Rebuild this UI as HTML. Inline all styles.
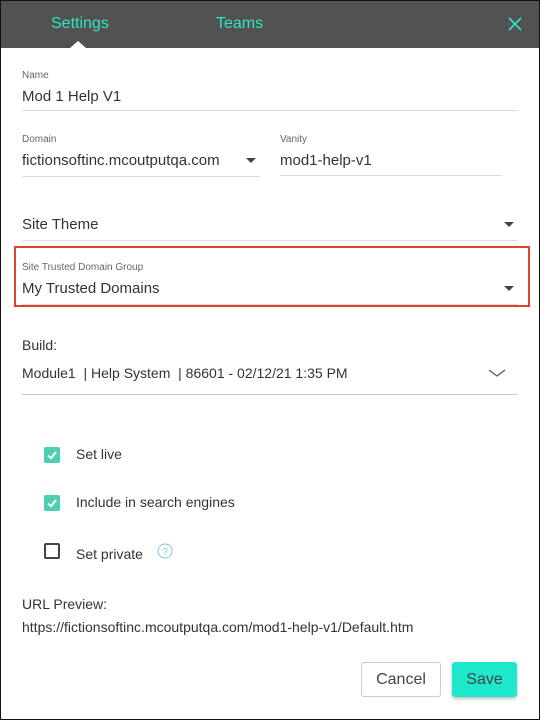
<!DOCTYPE html>
<html><head><meta charset="utf-8"><style>
*{margin:0;padding:0;box-sizing:border-box}
body{width:540px;height:720px;overflow:hidden;background:#fff;font-family:"Liberation Sans",sans-serif;color:#333;position:relative}
.frame{position:absolute;left:0;top:0;width:540px;height:720px;border:1px solid #111;pointer-events:none}
.hdr{position:absolute;left:0;top:0;width:540px;height:48px;background:#525252}
.t{position:absolute;white-space:nowrap;line-height:1}
.lbl{font-size:10px;color:#666}
.val{font-size:15px;color:#333}
.line{position:absolute;height:1px;background:#ddd}
.arr{position:absolute;width:0;height:0;border-left:5px solid transparent;border-right:5px solid transparent;border-top:5px solid #444}
.cb{position:absolute;width:16px;height:16px;border-radius:2px;background:#4fcfad}
.cbo{position:absolute;width:16px;height:16px;border:2px solid #444;border-radius:2px}
</style></head><body>
<div class="hdr"></div>
<div class="t" style="left:51px;top:16px;font-size:16px;color:#2de6c3">Settings</div>
<div class="t" style="left:216px;top:16px;font-size:16px;color:#2de6c3">Teams</div>
<svg style="position:absolute;left:507px;top:16px" width="16" height="16"><path d="M2 2L14 14M14 2L2 14" stroke="#2de6c3" stroke-width="1.6"/></svg>
<div style="position:absolute;left:70px;top:41px;width:0;height:0;border-left:8px solid transparent;border-right:8px solid transparent;border-bottom:7px solid #fff"></div>

<div class="t lbl" style="left:22px;top:71px">Name</div>
<div class="t val" style="left:22px;top:89px">Mod 1 Help V1</div>
<div class="line" style="left:22px;top:110px;width:496px"></div>

<div class="t lbl" style="left:22px;top:135px">Domain</div>
<div class="t val" style="left:22px;top:153px">fictionsoftinc.mcoutputqa.com</div>
<div class="arr" style="left:246px;top:158px"></div>
<div class="line" style="left:22px;top:176px;width:238px"></div>
<div class="t lbl" style="left:280px;top:135px">Vanity</div>
<div class="t val" style="left:280px;top:153px">mod1-help-v1</div>
<div class="line" style="left:280px;top:175px;width:222px"></div>

<div class="t val" style="left:22px;top:217px">Site Theme</div>
<div class="arr" style="left:504px;top:222px"></div>
<div class="line" style="left:22px;top:240px;width:496px"></div>

<div style="position:absolute;left:14px;top:246px;width:516px;height:61px;border:2px solid #e0432a"></div>
<div class="t lbl" style="left:22px;top:263px">Site Trusted Domain Group</div>
<div class="t val" style="left:22px;top:281px">My Trusted Domains</div>
<div class="arr" style="left:504px;top:286px"></div>
<div class="line" style="left:22px;top:304px;width:496px"></div>

<div class="t val" style="left:22px;top:338px;font-size:14px">Build:</div>
<div class="t val" style="left:22px;top:366px;font-size:14px">Module1 &nbsp;| Help System &nbsp;| 86601 - 02/12/21 1:35 PM</div>
<svg style="position:absolute;left:488px;top:368px" width="20" height="10"><path d="M1 2L9 8L17 2" stroke="#555" fill="none" stroke-width="1.2"/></svg>
<div class="line" style="left:22px;top:394px;width:496px;background:#ccc"></div>

<div class="cb" style="left:44px;top:447px"></div>
<svg style="position:absolute;left:44px;top:447px" width="16" height="16"><path d="M4 8.5L7 11L12 5" stroke="#fff" stroke-width="2" fill="none"/></svg>
<div class="t val" style="left:76px;top:447px;font-size:14px">Set live</div>
<div class="cb" style="left:44px;top:495px"></div>
<svg style="position:absolute;left:44px;top:495px" width="16" height="16"><path d="M4 8.5L7 11L12 5" stroke="#fff" stroke-width="2" fill="none"/></svg>
<div class="t val" style="left:76px;top:495px;font-size:14px">Include in search engines</div>
<div class="cbo" style="left:44px;top:543px"></div>
<div class="t val" style="left:76px;top:547px;font-size:14px">Set private</div>
<svg style="position:absolute;left:157px;top:543px" width="16" height="16"><circle cx="8" cy="8" r="7" stroke="#7cc3ea" fill="none"/><text x="8" y="12" font-size="10" text-anchor="middle" fill="#7cc3ea" font-family="Liberation Sans">?</text></svg>

<div class="t val" style="left:22px;top:597px;font-size:14px">URL Preview:</div>
<div class="t val" style="left:22px;top:620px;font-size:14px">https://fictionsoftinc.mcoutputqa.com/mod1-help-v1/Default.htm</div>

<div style="position:absolute;left:361px;top:662px;width:80px;height:35px;border:1px solid #ccc;border-radius:3px;font-size:16px;line-height:33px;text-align:center;color:#444">Cancel</div>
<div style="position:absolute;left:452px;top:662px;width:65px;height:35px;background:#1ee8cc;border-radius:3px;font-size:16px;line-height:35px;text-align:center;color:#444;box-shadow:0 2px 3px rgba(0,0,0,.25)">Save</div>
<div class="frame"></div>
</body></html>
